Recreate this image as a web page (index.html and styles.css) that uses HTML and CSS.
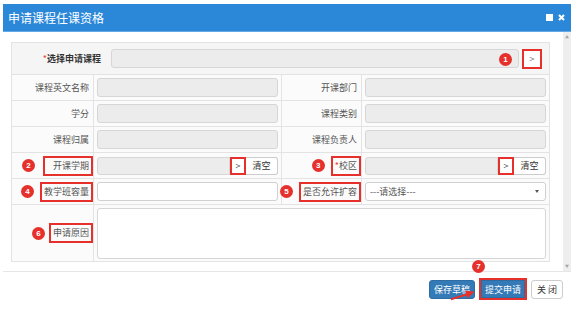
FILE: index.html
```html
<!DOCTYPE html>
<html lang="zh-CN">
<head>
    <meta charset="UTF-8">
    <meta name="viewport" content="width=device-width, initial-scale=1.0">
    <title>申请课程任课资格</title>
    <link rel="stylesheet" href="styles.css">
</head>
<body>
    <div class="dialog">
        <div class="titlebar">
            <span class="title">申请课程任课资格</span>
            <span class="tools">
                <span class="icon-max"></span>
                <svg class="icon-close" width="7" height="7" viewBox="0 0 7 7">
                    <path d="M1 1 L6 6 M6 1 L1 6" stroke="#fff" stroke-width="2"/>
                </svg>
            </span>
        </div>

        <div class="body">
            <div class="scroll">
                <div class="course-row">
                    <label class="course-label"><i class="req">*</i>选择申请课程</label>
                    <div class="course-field">
                        <input class="field" disabled>
                        <span class="badge badge-over">1</span>
                    </div>
                    <button class="pick pick-lg mark">&gt;</button>
                </div>

                <table class="grid">
                    <colgroup>
                        <col class="c-lab">
                        <col class="c-in">
                        <col class="c-lab2">
                        <col class="c-in">
                    </colgroup>
                    <tr>
                        <td class="lab"><span class="txt">课程英文名称</span></td>
                        <td class="val"><input class="field" disabled></td>
                        <td class="lab"><span class="txt">开课部门</span></td>
                        <td class="val"><input class="field" disabled></td>
                    </tr>
                    <tr>
                        <td class="lab"><span class="txt">学分</span></td>
                        <td class="val"><input class="field" disabled></td>
                        <td class="lab"><span class="txt">课程类别</span></td>
                        <td class="val"><input class="field" disabled></td>
                    </tr>
                    <tr>
                        <td class="lab"><span class="txt">课程归属</span></td>
                        <td class="val"><input class="field" disabled></td>
                        <td class="lab"><span class="txt">课程负责人</span></td>
                        <td class="val"><input class="field" disabled></td>
                    </tr>
                    <tr>
                        <td class="lab">
                            <div class="lab-in gap-8">
                                <span class="badge">2</span>
                                <span class="txt mark wide">开课学期</span>
                            </div>
                        </td>
                        <td class="val">
                            <div class="group">
                                <input class="field gfield" disabled>
                                <button class="pick mark">&gt;</button>
                                <button class="clear">清空</button>
                            </div>
                        </td>
                        <td class="lab">
                            <div class="lab-in">
                                <span class="badge">3</span>
                                <span class="txt mark"><i class="req">*</i>校区</span>
                            </div>
                        </td>
                        <td class="val">
                            <div class="group">
                                <input class="field gfield" disabled>
                                <button class="pick mark">&gt;</button>
                                <button class="clear">清空</button>
                            </div>
                        </td>
                    </tr>
                    <tr>
                        <td class="lab">
                            <div class="lab-in">
                                <span class="badge">4</span>
                                <span class="txt mark">教学班容量</span>
                            </div>
                        </td>
                        <td class="val"><input class="field open"></td>
                        <td class="lab">
                            <div class="lab-in">
                                <span class="badge">5</span>
                                <span class="txt mark">是否允许扩容</span>
                            </div>
                        </td>
                        <td class="val">
                            <div class="select">---请选择---</div>
                        </td>
                    </tr>
                    <tr class="tall">
                        <td class="lab">
                            <div class="lab-in gap-4">
                                <span class="badge">6</span>
                                <span class="txt mark">申请原因</span>
                            </div>
                        </td>
                        <td class="val" colspan="3"><textarea class="reason"></textarea></td>
                    </tr>
                </table>
            </div>
            <div class="scrollbar">
                <span class="arr">&#9650;</span>
                <span class="arr">&#9660;</span>
            </div>
        </div>

        <div class="footer">
            <button class="btn btn-primary">保存草稿</button>
            <span class="submit-wrap">
                <span class="badge badge-7">7</span>
                <button class="btn btn-primary btn-submit">提交申请</button>
            </span>
            <button class="btn btn-default">关 闭</button>
            <svg class="arrow" width="32" height="14" viewBox="0 0 32 14">
                <polygon points="4.5,10.4 20,5.6 19.2,2.5 28.5,3.8 21.6,10.3 20.6,7.4 5.2,12.2" fill="#e8302b"/>
            </svg>
        </div>
    </div>
</body>
</html>
```

FILE: styles.css
```css
* {
    box-sizing: border-box;
}
html, body {
    margin: 0;
    background: #fff;
}
body {
    font-family: "Noto Sans CJK SC", "Noto Sans", sans-serif;
    font-size: 9px;
    color: #555;
}
.dialog {
    width: 568px;
    height: 315px;
    margin: 4px 0 0 3px;
}
.titlebar {
    height: 28px;
    background: #2b88d9;
    border-bottom: 1px solid #64a9e6;
    color: #fff;
    display: flex;
    align-items: center;
    justify-content: space-between;
    padding: 0 6px 0 5px;
}
.title {
    font-size: 12px;
}
.tools {
    display: flex;
    align-items: center;
    gap: 5px;
}
.icon-max {
    width: 7px;
    height: 7px;
    background: #fff;
}
.body {
    display: flex;
    height: 239px;
}
.scroll {
    flex: 1;
    padding: 10px 13px 0 8px;
}
.scrollbar {
    width: 9px;
    background: #eeeeee;
    display: flex;
    flex-direction: column;
    justify-content: space-between;
    align-items: center;
    padding: 3px 0 2px;
}
.arr {
    font-size: 4px;
    color: #a5a5a5;
    line-height: 5px;
}

/* form */
.course-row {
    display: flex;
    align-items: center;
    height: 32px;
    background: #f5f5f5;
    border: 1px solid #e3e3e3;
    border-bottom: none;
    padding: 0 7px 0 0;
}
.course-label {
    width: 89px;
    text-align: right;
    color: #333;
    font-weight: bold;
    margin-right: 10px;
}
.req {
    font-style: normal;
    color: #e23a36;
    font-weight: normal;
}
.course-field {
    flex: 1;
    position: relative;
    margin-right: 3px;
}
.field {
    display: block;
    width: 100%;
    height: 19px;
    border: 1px solid #d6d6d6;
    border-radius: 3px;
    background: #ececec;
    margin: 0;
    padding: 0 4px;
    font: inherit;
}
.field.open {
    background: #fff;
    border-color: #d0d0d0;
}
.badge {
    width: 13px;
    height: 13px;
    border-radius: 50%;
    background: #e5302c;
    color: #fff;
    font-family: "Liberation Sans", Arial, sans-serif;
    font-size: 8px;
    font-weight: bold;
    display: inline-flex;
    align-items: center;
    justify-content: center;
    flex: none;
}
.badge-over {
    position: absolute;
    right: 7px;
    top: 4px;
}
.pick {
    width: 16px;
    height: 18px;
    padding: 0;
    margin: 0;
    background: #fff;
    color: #555;
    font: inherit;
    font-size: 9px;
    border: 1px solid #ccc;
}
.pick-lg {
    width: 20px;
    height: 20px;
    color: #777;
}
.mark {
    border: 2px solid #e5302c !important;
}

.grid {
    width: 538px;
    border-collapse: collapse;
    table-layout: fixed;
}
.c-lab { width: 82px; }
.c-lab2 { width: 80px; }
.c-in { width: 188px; }
.grid td {
    border: 1px solid #e3e3e3;
    height: 26px;
    padding: 0;
    background: #fbfbfb;
}
.grid tr.tall td {
    height: 57px;
}
.lab {
    text-align: right;
}
.txt {
    display: inline-block;
    line-height: 14px;
    padding: 1px 2px;
    border: 2px solid transparent;
    white-space: nowrap;
}
.txt.wide {
    padding-left: 8px;
}
.lab-in {
    display: flex;
    justify-content: flex-end;
    align-items: center;
    gap: 6px;
}
.lab-in.gap-8 { gap: 8px; }
.lab-in.gap-4 { gap: 4px; }
.val {
    padding: 0 3px 0 3px !important;
}
.group {
    display: flex;
    height: 18px;
}
.gfield {
    flex: 1;
    height: 18px;
    border-radius: 3px 0 0 3px;
}
.clear {
    width: 32px;
    height: 18px;
    margin: 0;
    padding: 0;
    background: #fff;
    color: #333;
    font: inherit;
    border: 1px solid #ccc;
    border-left: none;
    border-radius: 0 3px 3px 0;
}
.select {
    position: relative;
    height: 19px;
    line-height: 17px;
    border: 1px solid #d0d0d0;
    border-radius: 3px;
    background: #fff;
    padding-left: 4px;
    color: #555;
}
.select::after {
    content: "";
    position: absolute;
    right: 6px;
    top: 7px;
    border-left: 2.5px solid transparent;
    border-right: 2.5px solid transparent;
    border-top: 3px solid #555;
}
.reason {
    display: block;
    width: 100%;
    height: 51px;
    border: 1px solid #d6d6d6;
    border-radius: 3px;
    background: #fff;
    resize: none;
    margin: 0;
}

/* footer */
.footer {
    position: relative;
    border-top: 1px solid #e6e6e6;
    display: flex;
    justify-content: flex-end;
    align-items: center;
    gap: 4px;
    padding: 6px 8px 0 0;
}
.btn {
    height: 19px;
    padding: 0;
    margin: 0;
    font: inherit;
    font-size: 9px;
    border-radius: 3px;
}
.btn-primary {
    width: 46px;
    background: #337ab7;
    border: 1px solid #2e6da4;
    color: #fff;
}
.submit-wrap {
    position: relative;
    display: flex;
    border: 2px solid #e5302c;
}
.btn-submit {
    width: 44px;
    height: 18px;
    border-radius: 0;
}
.badge-7 {
    position: absolute;
    left: -9px;
    top: -20px;
}
.btn-default {
    width: 32px;
    background: #fff;
    border: 1px solid #ccc;
    color: #333;
}
.arrow {
    position: absolute;
    left: 443px;
    top: 16px;
}
```
